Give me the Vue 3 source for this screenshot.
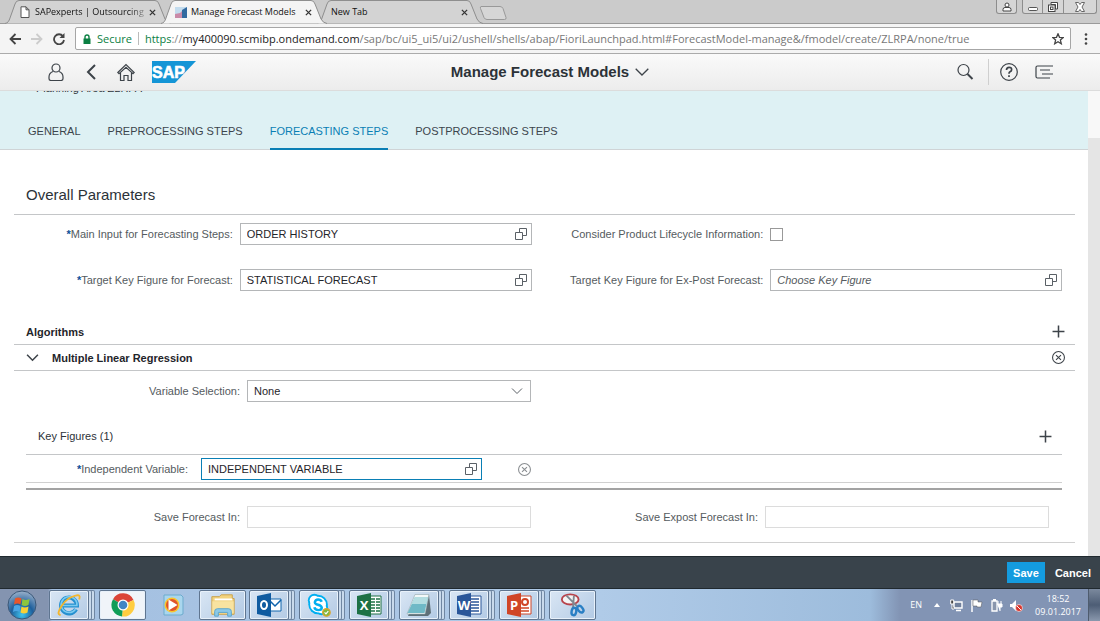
<script setup>
import { ref } from 'vue'

const url = ref('/sap/bc/ui5_ui5/ui2/ushell/shells/abap/FioriLaunchpad.html#ForecastModel-manage&/fmodel/create/ZLRPA/none/true')

const tabs = [
  { id: 'page', title: 'SAPexperts | Outsourcing', icon: 'page', fade: true },
  { id: 'model', title: 'Manage Forecast Models', icon: 'sap', active: true },
  { id: 'new', title: 'New Tab' },
]

const steps = ['General', 'Preprocessing Steps', 'Forecasting Steps', 'Postprocessing Steps']
const activeStep = ref(2)

const mainInput = ref('ORDER HISTORY')
const target = ref('STATISTICAL FORECAST')
const exPost = ref('')
const lifecycle = ref(false)
const selection = ref('None')
const independent = ref('INDEPENDENT VARIABLE')
const saveIn = ref('')
const saveExpost = ref('')

const apps = [
  { id: 'ie', name: 'Internet Explorer', look: 'stacked' },
  { id: 'chrome', name: 'Chrome', look: 'current' },
  { id: 'wmp', name: 'Media Player', look: 'plain' },
  { id: 'explorer', name: 'Explorer', look: 'single' },
  { id: 'outlook', name: 'Outlook', look: 'stacked' },
  { id: 'skype', name: 'Skype', look: 'stacked' },
  { id: 'excel', name: 'Excel', look: 'stacked' },
  { id: 'notepad', name: 'Notepad', look: 'stacked' },
  { id: 'word', name: 'Word', look: 'stacked' },
  { id: 'ppt', name: 'PowerPoint', look: 'stacked' },
  { id: 'snip', name: 'Snipping Tool', look: 'single' },
]
const office = {
  excel: { letter: 'X', color: '#1e7145' },
  word: { letter: 'W', color: '#2a5699' },
  ppt: { letter: 'P', color: '#d04526' },
}
</script>

<template>
  <div class="screen">
    <!-- browser tabs -->
    <div class="tabstrip">
      <div v-for="t in tabs" :key="t.id" class="tab" :class="{ on: t.active }">
        <svg class="tab-shape" viewBox="0 0 166 24" preserveAspectRatio="none" aria-hidden="true">
          <path d="M0 23.5C3 23 4 21 5 18L10 4Q11 .5 14 .5H150Q153 .5 154 4L160 19Q162 23 166 23.5" />
        </svg>
        <svg v-if="t.icon === 'page'" class="tab-icon" viewBox="0 0 12 12" aria-hidden="true">
          <path d="M2 .8h5l3 3v7.7H2zM7 .8v3h3" fill="#fff" stroke="#555" />
        </svg>
        <svg v-if="t.icon === 'sap'" class="tab-icon" viewBox="0 0 12 12" aria-hidden="true">
          <path d="M0 1h12v11H0z" fill="#c3dcee" />
          <path d="M0 8l5-1 3-3v8H0z" fill="#c98aa8" />
          <path d="M7 4l5-3v11H7z" fill="#31699f" />
        </svg>
        <span class="tab-title" :class="{ fade: t.fade }">{{ t.title }}</span>
        <button class="tab-close" aria-label="Close tab">
          <svg viewBox="0 0 8 8"><path d="M1 1l6 6M7 1L1 7" stroke="#333" stroke-width="1.5" /></svg>
        </button>
      </div>
      <button class="tab-add" aria-label="New tab">
        <svg viewBox="0 0 28 14"><path d="M2 .5h19q2 0 3 2l3 9q.5 2-1.500 2H8q-2 0-3-2L1.500 2.500Q1 .5 2 .5z" fill="#d6d6d6" stroke="#999" /></svg>
      </button>
      <div class="win-buttons">
        <button class="win user" aria-label="User">
          <svg viewBox="0 0 10 10"><circle cx="5" cy="3" r="2" fill="#fff" stroke="#444" /><path d="M1 9V7.500Q1 5.500 3 5.500h4q2 0 2 2V9z" fill="#fff" stroke="#444" /></svg>
        </button>
        <button class="win first" aria-label="Minimise">
          <svg viewBox="0 0 10 10"><rect x=".5" y="5.500" width="9" height="3" rx="1" fill="#fff" stroke="#555" /></svg>
        </button>
        <button class="win" aria-label="Restore">
          <svg viewBox="0 0 10 10"><path d="M3 .5h6.500V7H7.500V2.500H3z" fill="#fff" stroke="#444" /><rect x=".5" y="3" width="6.500" height="6.500" fill="#fff" stroke="#444" /><rect x="2.500" y="5" width="2.500" height="2.500" fill="none" stroke="#444" /></svg>
        </button>
        <button class="win last" aria-label="Close">
          <svg viewBox="0 0 10 10"><path d="M.5.5h3L5 2.500 6.500.5h3L7 5l2.500 4.500h-3L5 7.500 3.500 9.500h-3L3 5z" fill="#fff" stroke="#666" /></svg>
        </button>
      </div>
    </div>

    <!-- address bar -->
    <div class="toolbar">
      <button class="nav" aria-label="Back">
        <svg viewBox="0 0 12 12"><path d="M12 6H1.500M6.500 1l-5 5 5 5" stroke="#444" stroke-width="1.800" fill="none" /></svg>
      </button>
      <button class="nav" aria-label="Forward">
        <svg viewBox="0 0 12 12"><path d="M0 6h10.500M5.500 1l5 5-5 5" stroke="#ccc" stroke-width="1.800" fill="none" /></svg>
      </button>
      <button class="nav" aria-label="Reload">
        <svg viewBox="0 0 12 12"><path d="M10 3.200A5 5 0 1 0 11 7" stroke="#444" stroke-width="1.800" fill="none" /><path d="M11.500 0v5h-5z" fill="#444" /></svg>
      </button>
      <div class="address">
        <svg class="lock" viewBox="0 0 8 10" aria-hidden="true"><path d="M2 5V3a2 2 0 0 1 4 0v2" fill="none" stroke="#0b8043" stroke-width="1.400" /><rect x=".5" y="4.500" width="7" height="5.500" fill="#0b8043" /></svg>
        <span class="secure">Secure</span>
        <label class="origin" for="url"><span class="scheme">https</span><span class="sep">://</span>my400090.scmibp.ondemand.com</label>
        <input id="url" v-model="url" class="url" type="text">
        <button class="star" aria-label="Bookmark">
          <svg viewBox="0 0 12 12"><path d="M6 .8l1.500 3.500 3.800.3-2.900 2.500.9 3.700L6 8.800l-3.300 2 .9-3.700L.7 4.600l3.800-.3z" fill="none" stroke="#444" stroke-width="1.300" /></svg>
        </button>
      </div>
      <button class="more" aria-label="Menu">
        <svg viewBox="0 0 4 12"><circle cx="2" cy="1.500" r="1.300" /><circle cx="2" cy="6" r="1.300" /><circle cx="2" cy="10.500" r="1.300" /></svg>
      </button>
    </div>

    <!-- shell header -->
    <header class="shell">
      <div class="shell-side">
        <button class="shell-btn" aria-label="Me">
          <svg viewBox="0 0 18 18"><circle cx="9" cy="5" r="4" /><path d="M6 8.500q-4 1.500-4 5.500v1.500q0 2 2 2h10q2 0 2-2V14q0-4-4-5.500" /></svg>
        </button>
        <button class="shell-btn" aria-label="Back">
          <svg viewBox="0 0 18 18"><path d="M13 2L6 9l7 7" stroke-width="2" /></svg>
        </button>
        <button class="shell-btn" aria-label="Home">
          <svg viewBox="0 0 18 18"><path d="M.8 9.500L9 1.500l8.200 8-1.200 1.200L9 4.200l-7 6.500zM3.500 10v7.500H7v-5h4v5h3.500V10" /></svg>
        </button>
        <svg class="logo" viewBox="0 0 44 22" role="img" aria-label="SAP">
          <path d="M0 0h44L23 22H0z" fill="#1495d6" />
          <text x="0" y="17">SAP</text>
        </svg>
      </div>
      <button class="shell-title">
        Manage Forecast Models
        <svg viewBox="0 0 14 8"><path d="M.7.7L7 7l6.300-6.300" /></svg>
      </button>
      <div class="shell-side end">
        <button class="shell-btn" aria-label="Search">
          <svg viewBox="0 0 18 18"><circle cx="7.500" cy="7" r="5.500" /><path d="M11.500 11l5 5" stroke-width="2" /></svg>
        </button>
        <span class="bar"></span>
        <button class="shell-btn" aria-label="Help">
          <svg viewBox="0 0 18 18"><circle cx="9" cy="9" r="8.300" /><path d="M6.500 7q0-2.700 2.600-2.700T11.600 6.700Q11.600 8 10 8.800 9 9.300 9 10.800M9 12.300v1.700" stroke-width="1.700" /></svg>
        </button>
        <button class="shell-btn" aria-label="Notifications">
          <svg viewBox="0 0 18 18"><path d="M18 3H2.500Q1 3 1 4.500v9Q1 15 2.500 15H15M5 7h10M7 11h11" /></svg>
        </button>
      </div>
    </header>

    <div class="body">
      <main class="page">
        <div class="object">
          <p class="area">Planning Area ZLRPA</p>
          <nav class="steps">
            <a v-for="(s, i) in steps" :key="s" href="#" :class="{ on: i === activeStep }" @click.prevent="activeStep = i">{{ s.toUpperCase() }}</a>
          </nav>
        </div>

        <div class="content">
          <h2 class="section-title">Overall Parameters</h2>
          <div class="form overall">
            <label class="req" for="main-input">Main Input for Forecasting Steps:</label>
            <div class="field">
              <input id="main-input" v-model="mainInput" type="text">
              <button aria-label="Choose main input"><svg viewBox="0 0 12 12"><path d="M4.500 4V.5h7v7H8M.5 4.500h7v7h-7z" /></svg></button>
            </div>
            <label for="lifecycle">Consider Product Lifecycle Information:</label>
            <input id="lifecycle" v-model="lifecycle" class="check" type="checkbox">
            <label class="req" for="target">Target Key Figure for Forecast:</label>
            <div class="field">
              <input id="target" v-model="target" type="text">
              <button aria-label="Choose target"><svg viewBox="0 0 12 12"><path d="M4.500 4V.5h7v7H8M.5 4.500h7v7h-7z" /></svg></button>
            </div>
            <label for="expost">Target Key Figure for Ex-Post Forecast:</label>
            <div class="field">
              <input id="expost" v-model="exPost" type="text" placeholder="Choose Key Figure">
              <button aria-label="Choose ex-post target"><svg viewBox="0 0 12 12"><path d="M4.500 4V.5h7v7H8M.5 4.500h7v7h-7z" /></svg></button>
            </div>
          </div>

          <div class="bar-row">
            <h3>Algorithms</h3>
            <button class="icon" aria-label="Add algorithm"><svg viewBox="0 0 12 12"><path d="M6 .5v11M.5 6h11" stroke-width="1.400" /></svg></button>
          </div>
          <div class="bar-row">
            <button class="icon expand" aria-label="Collapse"><svg viewBox="0 0 12 12"><path d="M1 3.500l5 5 5-5" stroke-width="1.400" /></svg></button>
            <h3>Multiple Linear Regression</h3>
            <button class="icon" aria-label="Remove algorithm"><svg viewBox="0 0 12 12"><circle cx="6" cy="6" r="5.500" /><path d="M3.700 3.700l4.600 4.600M8.300 3.700L3.700 8.300" /></svg></button>
          </div>

          <div class="panel">
            <div class="form inner">
              <label for="selection">Variable Selection:</label>
              <div class="field">
                <select id="selection" v-model="selection">
                  <option>None</option>
                </select>
                <svg class="arrow" viewBox="0 0 12 12" aria-hidden="true"><path d="M1 3.500l5 5 5-5" /></svg>
              </div>
            </div>
            <div class="bar-row figures">
              <h4>Key Figures (1)</h4>
              <button class="icon" aria-label="Add key figure"><svg viewBox="0 0 12 12"><path d="M6 .5v11M.5 6h11" stroke-width="1.400" /></svg></button>
            </div>
            <div class="form variable">
              <label class="req" for="independent">Independent Variable:</label>
              <div class="field focus">
                <input id="independent" v-model="independent" type="text">
                <button aria-label="Choose variable"><svg viewBox="0 0 12 12"><path d="M4.500 4V.5h7v7H8M.5 4.500h7v7h-7z" /></svg></button>
              </div>
              <button class="icon faded" aria-label="Remove variable"><svg viewBox="0 0 12 12"><circle cx="6" cy="6" r="5.500" /><path d="M3.700 3.700l4.600 4.600M8.300 3.700L3.700 8.300" /></svg></button>
            </div>
            <hr class="rule">
            <div class="form inner">
              <label for="save-in">Save Forecast In:</label>
              <div class="field pale"><input id="save-in" v-model="saveIn" type="text"></div>
              <label for="save-expost">Save Expost Forecast In:</label>
              <div class="field pale"><input id="save-expost" v-model="saveExpost" type="text"></div>
            </div>
          </div>
        </div>
      </main>
      <div class="scroll"><div class="thumb"></div></div>
    </div>

    <footer class="actions">
      <button class="save">Save</button>
      <button class="cancel">Cancel</button>
    </footer>

    <!-- windows taskbar -->
    <div class="taskbar">
      <button class="start" aria-label="Start">
        <svg viewBox="0 0 30 30">
          <defs>
            <radialGradient id="orb" cx=".5" cy=".85" r=".8"><stop offset="0" stop-color="#3fc4ee" /><stop offset=".5" stop-color="#1d5f9c" /><stop offset="1" stop-color="#8fa9c6" /></radialGradient>
          </defs>
          <circle cx="15" cy="15" r="14" fill="url(#orb)" stroke="#3b5878" />
          <path d="M8 8.500q3-2 6.500 0l-1 6q-3-2-6.500 0z" fill="#e8562a" />
          <path d="M15.500 9q3 2 7 0l-1 6q-3.500 2-7 0z" fill="#8cc63e" />
          <path d="M7 16q3-2 6.500 0l-1 6q-3-2-6.500 0z" fill="#4aa5e4" />
          <path d="M14.500 16.500q3 2 7 0l-1 6q-3.500 2-7 0z" fill="#fbd034" />
        </svg>
      </button>
      <div v-for="a in apps" :key="a.id" class="slot" :class="a.look">
        <button class="app" :aria-label="a.name">
          <svg v-if="a.id === 'ie'" viewBox="0 0 28 26">
            <path d="M21.500 17.500A8.500 8.500 0 1 1 22.500 13.500H7" fill="none" stroke="#2590d0" stroke-width="4.500" />
            <path d="M21 17.500A8.500 8.500 0 1 1 22.500 13.500H7" fill="none" stroke="#7ccbf0" stroke-width="1.800" />
            <path d="M5 24Q0 23 6 14T21 3q6-2 4 4" fill="none" stroke="#f3b62d" stroke-width="2" />
          </svg>
          <svg v-else-if="a.id === 'chrome'" viewBox="0 0 26 26">
            <path d="M13 13L3 7.200A11.500 11.500 0 0 1 23.500 8z" fill="#db4437" />
            <path d="M13 13l10.500-5A11.500 11.500 0 0 1 12 24.500z" fill="#ffcd40" />
            <path d="M13 13l-1 11.500A11.500 11.500 0 0 1 3 7.200z" fill="#0f9d58" />
            <circle cx="13" cy="13" r="5.500" fill="#fff" /><circle cx="13" cy="13" r="4.300" fill="#4285c4" />
          </svg>
          <svg v-else-if="a.id === 'wmp'" viewBox="0 0 26 26">
            <path d="M4 3h17l2 2v17l-2 1H4z" fill="#a9d6ee" stroke="#6cabcd" />
            <circle cx="12" cy="13" r="7.500" fill="#f8c62f" /><circle cx="12" cy="13" r="6" fill="#e0552b" />
            <path d="M8.500 7.500l9 5.500-9 5.500z" fill="#fff" />
          </svg>
          <svg v-else-if="a.id === 'explorer'" viewBox="0 0 28 26">
            <path d="M2 4h8l2-2h12v4h2v17H2z" fill="#f2d37e" stroke="#c9a04a" />
            <path d="M5 6h19v2H5z" fill="#fff" /><path d="M2.500 9h23v13h-23z" fill="#f8e3a0" />
            <path d="M5 25v-5q0-3 3-3h12q3 0 3 3v5h-4v-4H9v4z" fill="#8cc9e8" stroke="#5aa4cb" />
          </svg>
          <svg v-else-if="a.id === 'outlook'" viewBox="0 0 26 26">
            <path d="M13 7h12v12H13z" fill="#fff" stroke="#0f64ad" /><path d="M13 8l6 6 6-6" fill="none" stroke="#0f64ad" stroke-width="1.500" />
            <path d="M1 4l14-3v24L1 22z" fill="#0f5ba0" />
            <ellipse cx="8" cy="13" rx="3" ry="4" fill="none" stroke="#fff" stroke-width="2" />
          </svg>
          <svg v-else-if="a.id === 'skype'" viewBox="0 0 28 26">
            <circle cx="9" cy="8" r="7" fill="#00aff0" /><circle cx="17" cy="17" r="7" fill="#00aff0" /><circle cx="13" cy="12.500" r="10.500" fill="#00aff0" />
            <circle cx="9" cy="8" r="5" fill="#fff" /><circle cx="17" cy="17" r="5" fill="#fff" /><circle cx="13" cy="12.500" r="8.500" fill="#fff" />
            <path d="M17 9.500Q16 7 13 7T9.500 10q0 2 3.500 2.700T17 16q0 2.500-3.700 2.500T9 15.500" fill="none" stroke="#00aff0" stroke-width="2.600" />
            <circle cx="22" cy="21" r="4" fill="#7fba3c" stroke="#d9a52f" stroke-width="1.500" /><path d="M20 21l1.500 1.500L24 19.500" fill="none" stroke="#fff" stroke-width="1.300" />
          </svg>
          <svg v-else-if="office[a.id]" viewBox="0 0 26 26">
            <path d="M13 4h12v18H13z" fill="#fff" :stroke="office[a.id].color" />
            <path v-if="a.id === 'excel'" d="M15 7h4m1 0h4M15 10h4m1 0h4M15 13h4m1 0h4M15 16h4m1 0h4M15 19h4m1 0h4" :stroke="office[a.id].color" stroke-width="1.500" />
            <path v-else-if="a.id === 'word'" d="M15 7h8M15 10h8M15 13h8M15 16h8M15 19h8" :stroke="office[a.id].color" stroke-width="1.500" />
            <g v-else><circle cx="19" cy="10" r="3" fill="none" :stroke="office[a.id].color" stroke-width="2" /><path d="M15 16h8M15 19h8" :stroke="office[a.id].color" stroke-width="1.500" /></g>
            <path d="M1 4l14-3v24L1 22z" :fill="office[a.id].color" />
            <text class="letter" x="8" y="18" text-anchor="middle">{{ office[a.id].letter }}</text>
          </svg>
          <svg v-else-if="a.id === 'notepad'" viewBox="0 0 26 26">
            <path d="M10 3h13l2 18-3 3H2z" fill="#5f7078" /><path d="M9 2.500h14l-4 19.500H1z" fill="#f3f8f8" stroke="#93a7ad" stroke-width=".6" />
            <path d="M9 5h13l-3.500 16H1.500z" fill="#6fb9c6" /><path d="M9 5h13l-1.500 7H5.500z" fill="#b3dde1" />
          </svg>
          <svg v-else viewBox="0 0 28 26">
            <ellipse cx="11" cy="7" rx="9" ry="5.500" fill="#f4f4f4" stroke="#b8434b" stroke-width="2" />
            <path d="M7 3l12 12M15 3l-1 13" stroke="#7f8790" stroke-width="2" />
            <ellipse cx="15" cy="20" rx="2.500" ry="4" fill="none" stroke="#2a7fc4" stroke-width="2.600" transform="rotate(12 15 20)" /><ellipse cx="22" cy="17.500" rx="2.500" ry="4" fill="none" stroke="#2a7fc4" stroke-width="2.600" transform="rotate(-40 22 17.500)" />
          </svg>
        </button>
      </div>
      <div class="tray">
        <span class="lang">EN</span>
        <svg class="up" viewBox="0 0 6 4" aria-hidden="true"><path d="M0 4l3-4 3 4z" fill="#fff" /></svg>
        <svg class="tray-icon" viewBox="0 0 13 13" aria-hidden="true"><path d="M4 3h8v6H4zM6 11.500h5" fill="#70809c" stroke="#fff" stroke-width="1.400" /><path d="M.7 1h3v4h-3zM2 5v5h2" fill="#444" stroke="#fff" /></svg>
        <svg class="tray-icon" viewBox="0 0 13 13" aria-hidden="true"><path d="M2 1v12" stroke="#fff" stroke-width="1.500" /><path d="M3 1h5v2h4L11 8H7V7H3z" fill="#fff" stroke="#555" stroke-width=".5" /></svg>
        <svg class="tray-icon" viewBox="0 0 13 13" aria-hidden="true"><path d="M2 2h5v10H2zM3 .7h3" fill="#8996ad" stroke="#fff" stroke-width="1.300" /><path d="M7 5h5v3H10v4M8 2v3M11 2v3" fill="#fff" stroke="#fff" /></svg>
        <svg class="tray-icon" viewBox="0 0 13 13" aria-hidden="true"><path d="M0 5h2l4-4v11L2 8H0z" fill="#fff" /><circle cx="9" cy="9" r="3.500" fill="#d9352d" stroke="#fff" stroke-width=".6" /><path d="M7 7l4 4" stroke="#fff" /></svg>
        <div class="clock"><span>18:52</span><span>09.01.2017</span></div>
        <button class="desktop" aria-label="Show desktop"></button>
      </div>
    </div>
  </div>
</template>

<style>
body { margin: 0; background: #fff; }
</style>

<style scoped>
.screen {
  --line: #c4c6c8;
  --ink: #2c3238;
  --blue: #0a7fb5;
  display: flex;
  flex-direction: column;
  min-height: 100vh;
  font: 11px/14px "Liberation Sans", Arial, sans-serif;
  color: var(--ink);
}
* { box-sizing: border-box; }
button {
  border: 0;
  padding: 0;
  background: none;
  color: inherit;
  font: inherit;
  cursor: pointer;
}
svg { display: block; flex: none; }
h2, h3, h4, p { margin: 0; }

/* tabs */
.tabstrip {
  display: flex;
  align-items: flex-start;
  height: 24px;
  padding-left: 5px;
  background: #cbcbcb;
  border-bottom: 1px solid #9a9a9a;
  font: 9px/14px "Open Sans", "Noto Sans", sans-serif;
}
.tab {
  position: relative;
  display: flex;
  align-items: center;
  gap: 4px;
  width: 166px;
  height: 24px;
  margin-right: -10px;
  padding: 0 15px 0 14px;
}
.tab.on { z-index: 1; }
.tab-shape {
  position: absolute;
  inset: 0;
  width: 100%;
  height: 100%;
  fill: #d3d3d3;
  stroke: #8e8e8e;
}
.tab.on .tab-shape { fill: #f4f4f4; }
.tab-icon { position: relative; width: 12px; height: 12px; }
.tab-title {
  position: relative;
  flex: 1;
  white-space: nowrap;
  color: #111;
}
.tab-title.fade { mask-image: linear-gradient(90deg, #000 85%, rgba(0, 0, 0, 0.3)); }
.tab-close { position: relative; }
.tab-close svg { width: 7px; height: 7px; }
.tab-add { margin: 6px 0 0 6px; }
.tab-add svg { width: 28px; height: 14px; }
.win-buttons { display: flex; margin: 0 3px 0 auto; }
.win {
  display: grid;
  place-items: center;
  width: 21px;
  height: 14px;
  border: 1px solid #8d8d8d;
  border-top: 0;
  border-left: 0;
  background: #d6d6d6;
}
.win svg { width: 10px; height: 10px; }
.win.user { margin-right: 5px; border-left: 1px solid #8d8d8d; border-radius: 0 0 3px 3px; }
.win.first { border-left: 1px solid #8d8d8d; border-radius: 0 0 0 3px; }
.win.last { width: 33px; border-radius: 0 0 3px 0; }

/* address bar */
.toolbar {
  display: flex;
  align-items: center;
  gap: 10px;
  height: 30px;
  padding: 0 12px 0 9px;
  background: #f4f4f4;
  border-bottom: 1px solid #ababab;
}
.nav svg { width: 12px; height: 12px; }
.address {
  display: flex;
  flex: 1;
  align-items: center;
  height: 23px;
  padding: 0 6px 0 7px;
  border: 1px solid #a6a6a6;
  border-radius: 2px;
  background: #fff;
  font: 11px/16px "Open Sans", "Noto Sans", sans-serif;
  color: #222;
}
.lock { width: 8px; height: 10px; margin-right: 6px; }
.secure {
  margin-right: 6px;
  padding-right: 6px;
  border-right: 1px solid #bbb;
  line-height: 13px;
}
.secure, .scheme { color: #0b8043; }
.sep { color: #888; }
.url {
  flex: 1;
  min-width: 0;
  padding: 0;
  border: 0;
  outline: 0;
  background: none;
  font: inherit;
  color: #777;
}
.star svg { width: 12px; height: 12px; }
.more { margin-left: 3px; }
.more svg { width: 4px; height: 12px; fill: #444; }

/* shell */
.shell {
  display: flex;
  align-items: center;
  height: 37px;
  padding: 0 47px;
  background: linear-gradient(#fafafa, #ececec);
  border-bottom: 1px solid #dcdcdc;
}
.shell-side { display: flex; flex: 1; align-items: center; gap: 17px; }
.shell-side.end { justify-content: flex-end; }
.shell-btn svg {
  width: 18px;
  height: 18px;
  fill: none;
  stroke: #3d4349;
  stroke-width: 1.2;
}
.logo { width: 44px; height: 22px; }
.logo text { font: bold 16px "Liberation Sans", Arial, sans-serif; fill: #fff; stroke: #fff; stroke-width: 0.6; }
.shell-title {
  display: flex;
  align-items: center;
  gap: 6px;
  font-size: 15px;
  line-height: 20px;
  font-weight: bold;
}
.shell-title svg { width: 14px; height: 8px; fill: none; stroke: #3d4349; stroke-width: 1.3; }
.bar { width: 1px; height: 26px; margin: 0 -6px 0 -3px; background: #cfcfcf; }

/* page */
.body { display: flex; flex: 1; }
.page { flex: 1; min-width: 0; }
.scroll { width: 12px; background: #e5e5e5; }
.thumb { height: 47px; background: #f8f8f8; }
.object {
  height: 59px;
  overflow: hidden;
  background: #def1f4;
  box-shadow: inset 0 -1px #cfd4d6;
}
/* scrolled halfway under the shell header */
.area { margin: -10px 0 0 36px; }
.steps { display: flex; gap: 27px; padding: 29px 28px 0; }
.steps a {
  height: 26px;
  color: #3c454c;
  text-decoration: none;
}
.steps a.on { color: var(--blue); border-bottom: 2px solid var(--blue); }
.content { padding: 0 13px 13px 14px; }
.section-title {
  padding: 34px 12px 8px;
  border-bottom: 1px solid var(--line);
  font-size: 15px;
  line-height: 22px;
  font-weight: normal;
}

/* forms */
.form { display: grid; align-items: center; column-gap: 7px; }
.form label { text-align: right; white-space: nowrap; color: #555b60; }
.req::before { content: "*"; font-weight: bold; color: #0b4f9a; }
.overall {
  grid-template-columns: 219fr 292fr 225fr 292fr;
  row-gap: 24px;
  padding: 8px 13px 28px 0;
}
.inner { grid-template-columns: 214fr 284fr 220fr 284fr; }
.variable {
  grid-template-columns: 162fr 281fr 567fr;
  column-gap: 13px;
  padding: 3px 0 2px;
  border-bottom: 1px solid #d0d0d0;
}
.field {
  display: flex;
  align-items: center;
  min-width: 0;
  height: 22px;
  padding-right: 4px;
  border: 1px solid #b4b6b8;
  background: #fff;
}
.field.focus { border-color: var(--blue); }
.field.pale { border-color: #dcdcdc; }
.field input,
.field select {
  flex: 1;
  min-width: 0;
  height: 20px;
  padding: 0 6px;
  border: 0;
  outline: 0;
  background: none;
  appearance: none;
  font: inherit;
  color: #1f252a;
}
.field input::placeholder { color: #555b60; font-style: italic; opacity: 1; }
.field svg { width: 12px; height: 12px; fill: none; stroke: #5a6066; }
.field .arrow { margin-right: 3px; }
.check {
  width: 13px;
  height: 13px;
  margin: 0;
  border: 1px solid #999;
  appearance: none;
}

/* toolbars */
.bar-row {
  display: flex;
  align-items: center;
  height: 26px;
  padding: 0 10px 0 12px;
  border-bottom: 1px solid var(--line);
}
.bar-row h3 { flex: 1; font-size: 11px; line-height: 14px; color: #1f252a; }
.bar-row h4 { flex: 1; font-size: 11px; line-height: 14px; font-weight: normal; }
.icon { display: block; }
.icon svg { width: 13px; height: 13px; fill: none; stroke: #3d4349; }
.icon.expand { margin-right: 13px; }
.icon.faded { margin-left: 23px; justify-self: start; opacity: 0.6; }
.panel {
  padding: 9px 13px 14px 12px;
  border-bottom: 1px solid #d0d0d0;
}
.panel .inner { padding-right: 13px; }
.bar-row.figures { height: 37px; margin-top: 16px; }
.rule { height: 2px; margin: 5px 0 16px; border: 0; background: #a3a3a3; }

/* footer */
.actions {
  display: flex;
  align-items: center;
  justify-content: flex-end;
  gap: 10px;
  height: 33px;
  padding-right: 9px;
  border-top: 1px solid #20292f;
  border-bottom: 1px solid #20292f;
  background: #39434b;
  font-weight: bold;
  color: #fff;
}
.save { width: 38px; height: 21px; background: #149bdf; }

/* taskbar */
.taskbar {
  display: flex;
  height: 32px;
  background: linear-gradient(90deg, #8494b0 0, #8494b0 48px, #a3bfe0 52px, #b0cbe8 600px, #9dbcdc 870px, #8294b4 900px);
}
.start { width: 48px; }
.start svg { width: 30px; height: 30px; margin: 0 7px; }
.slot { width: 50px; padding: 1px 2px 1px 1px; }
.slot.stacked { padding-right: 3px; }
.app {
  display: grid;
  place-items: center;
  width: 100%;
  height: 30px;
  border: 1px solid #5f7590;
  border-radius: 2px;
  box-shadow: inset 0 0 0 1px #e8f1fa;
  background: linear-gradient(135deg, #d9e6f4, #b3cae4);
}
.app svg { width: 26px; height: 26px; }
.current .app { background: #f0f4f9; }
.plain .app { border-color: transparent; box-shadow: none; background: none; }
.stacked .app {
  width: 40px;
  box-shadow: inset 0 0 0 1px #e8f1fa, 3px 0 0 -1px #c9daec, 3px 0 0 #6f86a2, 6px 0 0 -1px #c9daec, 6px 0 0 #6f86a2;
}
.letter { font: bold 13px "Open Sans", sans-serif; fill: #fff; }
.tray {
  display: flex;
  align-items: center;
  gap: 7px;
  margin-left: auto;
  font: 9px/12px "Open Sans", "Noto Sans", sans-serif;
  color: #fff;
}
.lang { margin-right: 5px; }
.up { width: 6px; height: 4px; margin-right: 3px; }
.tray-icon { width: 13px; height: 13px; }
.clock { display: grid; justify-items: center; gap: 1px; margin-left: 5px; }
.desktop {
  width: 12px;
  height: 32px;
  border-left: 1px solid #4f5c6e;
  background: linear-gradient(#7b899d, #4d5d75, #8a98ad);
}
</style>
